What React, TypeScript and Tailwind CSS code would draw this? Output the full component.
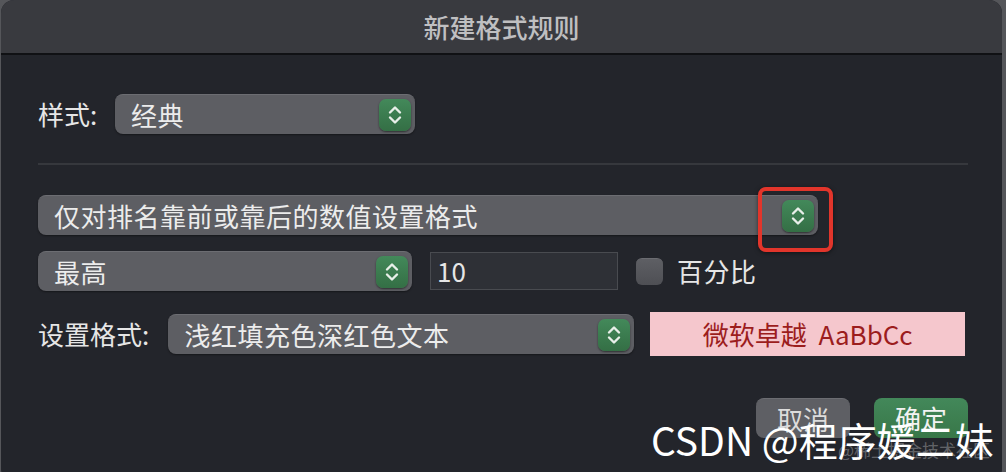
import React from "react";

const font = { fontFamily: '"Noto Sans CJK SC", "Noto Sans", sans-serif' };

function Stepper() {
  return (
    <div className="w-[32px] h-[32px] rounded-[7px] bg-gradient-to-b from-[#43895a] to-[#346f45] shadow-[0_1px_2px_rgba(0,0,0,0.5)] flex items-center justify-center shrink-0">
      <svg width="16" height="22" viewBox="0 0 16 22" fill="none" stroke="#e8efe9" strokeWidth="2.4" strokeLinecap="round" strokeLinejoin="round">
        <path d="M3 8.5 L8 3.5 L13 8.5" />
        <path d="M3 13.5 L8 18.5 L13 13.5" />
      </svg>
    </div>
  );
}

function Select({ text, className }: { text: string; className: string }) {
  return (
    <div className={`h-[40px] rounded-[8px] bg-[#5d5e63] border-t border-[#6c6d72] shadow-[0_1px_2px_rgba(0,0,0,0.4)] flex items-center justify-between pl-[16px] pr-[4px] ${className}`}>
      <span className="text-[26px] tracking-[0.5px] leading-none text-[#ececec]">{text}</span>
      <Stepper />
    </div>
  );
}

export default function App() {
  return (
    <div className="w-[1006px] h-[472px] bg-[#55565a] overflow-hidden relative" style={font}>
      <div className="ml-[1px] w-[1001px] h-[482px] rounded-[13px] bg-[#23252b] overflow-hidden flex flex-col">
        <div className="h-[55px] shrink-0 bg-[#393a3f] border-b-2 border-[#101114] flex items-center justify-center">
          <span className="text-[26px] font-medium text-[#bfbfc1]">新建格式规则</span>
        </div>
        <div className="pl-[37px] pr-[37px] flex flex-col">
          <div className="mt-[39px] flex items-center">
            <span className="w-[77px] text-[26px] text-[#e6e6e6] leading-none">样式:</span>
            <Select text="经典" className="w-[300px]" />
          </div>
          <div className="mt-[29px] h-[2px] w-[930px] bg-[#36383d]" />
          <div className="mt-[30px] relative">
            <Select text="仅对排名靠前或靠后的数值设置格式" className="w-[780px]" />
            <div className="absolute left-[720px] top-[-8px] w-[75px] h-[65px] rounded-[8px] border-[4px] border-[#e2352b] shadow-[0_1px_4px_rgba(0,0,0,0.5)]" />
          </div>
          <div className="mt-[16px] flex items-center">
            <Select text="最高" className="w-[374px]" />
            <div className="ml-[18px] w-[188px] h-[38px] bg-[#2e3036] border border-[#494b50] flex items-center pl-[6px]">
              <span className="text-[26px] leading-none text-[#e6e6e6]">10</span>
            </div>
            <div className="ml-[18px] w-[27px] h-[27px] rounded-[6px] bg-gradient-to-b from-[#5e5f64] to-[#4e4f54] border-t border-[#6b6c71]" />
            <span className="ml-[14px] text-[26px] tracking-[0.5px] leading-none text-[#e6e6e6]">百分比</span>
          </div>
          <div className="mt-[21px] flex items-center">
            <span className="w-[131px] text-[26px] text-[#e6e6e6] leading-none">设置格式:</span>
            <Select text="浅红填充色深红色文本" className="w-[468px]" />
            <div className="ml-[16px] w-[316px] h-[44px] bg-[#f5c7cd] flex items-center justify-center">
              <span className="text-[26px] leading-none text-[#9c1d1d]">微软卓越&nbsp;&nbsp;AaBbCc</span>
            </div>
          </div>
          <div className="mt-[42px] flex justify-end gap-[24px] w-[930px]">
            <div className="w-[94px] h-[40px] rounded-[8px] bg-[#5e5f64] border-t border-[#6c6d72] flex items-center justify-center">
              <span className="text-[26px] leading-none text-[#dcdcdc]">取消</span>
            </div>
            <div className="w-[94px] h-[40px] rounded-[8px] bg-gradient-to-b from-[#43885a] to-[#387748] flex items-center justify-center">
              <span className="text-[26px] leading-none text-[#f2f2f2]">确定</span>
            </div>
          </div>
        </div>
      </div>
      <span className="absolute left-[838px] top-[441px] text-[17px] leading-none text-white/30 whitespace-nowrap">@稀土掘金技术社区</span>
      <span className="absolute left-[651px] top-[420px] text-[39px] leading-none text-white whitespace-nowrap">CSDN @程序媛二妹</span>
    </div>
  );
}
